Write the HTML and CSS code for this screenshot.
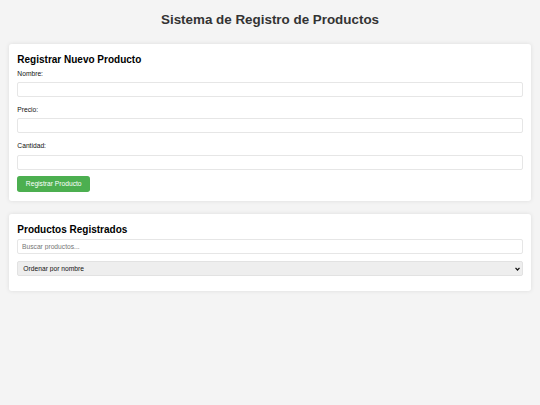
FILE: index.html
```html
<!DOCTYPE html>
<html lang="es">
<head>
  <meta charset="UTF-8">
  <meta name="viewport" content="width=device-width, initial-scale=1.0">
  <title>Sistema de Registro de Productos</title>
  <link rel="stylesheet" href="styles.css">
</head>
<body>
  <div class="container">
    <h1>Sistema de Registro de Productos</h1>

    <!-- formulario de registro -->
    <div class="card">
      <h2>Registrar Nuevo Producto</h2>
      <form id="product_form">
        <div class="form_group">
          <label for="nombre">Nombre:</label>
          <input id="nombre" type="text">
        </div>
        <div class="form_group">
          <label for="precio">Precio:</label>
          <input id="precio" type="text">
        </div>
        <div class="form_group last">
          <label for="cantidad">Cantidad:</label>
          <input id="cantidad" type="text">
        </div>
        <button type="button" class="btn_submit">Registrar Producto</button>
      </form>
    </div>

    <!-- lista de productos -->
    <div class="card">
      <h2>Productos Registrados</h2>
      <input class="search" type="text" placeholder="Buscar productos...">
      <div class="sort_wrap">
        <select class="sort">
          <option>Ordenar por nombre</option>
          <option>Ordenar por precio</option>
          <option>Ordenar por cantidad</option>
        </select>
        <!-- flecha del select -->
        <svg class="sort_arrow" width="5" height="4" viewBox="0 0 5 4">
          <path d="M0.5 0.8 L2.5 3 L4.5 0.8" fill="none" stroke="#111" stroke-width="1.2"/>
        </svg>
      </div>
      <div id="product_list"></div>
    </div>
  </div>
</body>
</html>
```

FILE: styles.css
```css
*{
  margin: 0;
  padding: 0;
  box-sizing: border-box;
}
body{
  background-color: #f4f4f4;
  font-family: "Liberation Sans", Arial, sans-serif;
  font-size: 6.7px;
  color: #000;
}
.container{
  padding: 0 8.65px;
}
h1{
  margin: 11.5px 0 17.5px;
  line-height: 15px;
  text-align: center;
  font-size: 13.4px;
  color: #333;
}
.card{
  margin-bottom: 13.6px;
  padding: 8.7px;
  background-color: #fff;
  border-radius: 2.7px;
  box-shadow: 0 0 4px rgba(0, 0, 0, .1);
}
.card h2{
  margin-bottom: 2px;
  line-height: 14px;
  font-size: 10px;
}
.form_group{
  margin-bottom: 8px;
}
.form_group.last{
  margin-bottom: 6.4px;
}
.form_group label{
  display: block;
  margin-bottom: 3.3px;
  line-height: 10px;
  color: #111;
}
input,select,button{
  outline: none;
  font-family: inherit;
  font-size: 6.7px;
}
.form_group input,
.search{
  display: block;
  width: 100%;
  height: 15px;
  padding: 0 3.7px;
  border: 1px solid #e6e6e6;
  border-radius: 2px;
}
.search{
  margin-bottom: 6.7px;
}
.search::placeholder{
  color: #757575;
}
.sort_wrap{
  position: relative;
  margin-bottom: 6.3px;
}
.sort{
  display: block;
  width: 100%;
  height: 15.7px;
  padding: 0 5px;
  background-color: #eee;
  border: 1px solid #e2e2e2;
  border-radius: 2px;
  color: #111;
  appearance: none;
  -webkit-appearance: none;
}
.sort_arrow{
  position: absolute;
  top: 6px;
  right: 3px;
}
.btn_submit{
  height: 16px;
  padding: 0 8.5px;
  background-color: #4caf50;
  border: 0;
  border-radius: 2.7px;
  color: #fff;
}
```
